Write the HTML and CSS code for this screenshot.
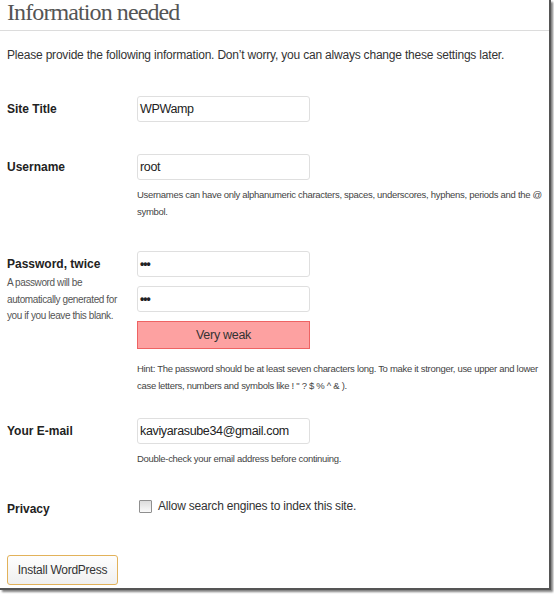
FILE: index.html
```html
<!DOCTYPE html>
<html>
<head>
<meta charset="utf-8">
<link rel="stylesheet" href="styles.css">
</head>
<body>
<div class="frame">
  <h1 class="title">Information needed</h1>
  <p class="intro">Please provide the following information. Don’t worry, you can always change these settings later.</p>

  <div class="row row-site">
    <div class="label">Site Title</div>
    <div class="field"><div class="input">WPWamp</div></div>
  </div>

  <div class="row row-user">
    <div class="label">Username</div>
    <div class="field">
      <div class="input">root</div>
      <p class="desc">Usernames can have only alphanumeric characters, spaces, underscores, hyphens, periods and the @ symbol.</p>
    </div>
  </div>

  <div class="row row-pass">
    <div class="label">Password, twice
      <p class="label-desc">A password will be automatically generated for you if you leave this blank.</p>
    </div>
    <div class="field">
      <div class="input dots">•••</div>
      <div class="input dots second">•••</div>
      <div class="strength">Very weak</div>
      <p class="desc hint">Hint: The password should be at least seven characters long. To make it stronger, use upper and lower case letters, numbers and symbols like ! " ? $ % ^ &amp; ).</p>
    </div>
  </div>

  <div class="row row-mail">
    <div class="label">Your E-mail</div>
    <div class="field">
      <div class="input">kaviyarasube34@gmail.com</div>
      <p class="desc">Double-check your email address before continuing.</p>
    </div>
  </div>

  <div class="row row-privacy">
    <div class="label">Privacy</div>
    <div class="field check-line"><span class="checkbox"></span><span>Allow search engines to index this site.</span></div>
  </div>

  <div class="actions"><span class="button">Install WordPress</span></div>
</div>
</body>
</html>
```

FILE: styles.css
```css
html, body {
  margin: 0;
  padding: 0;
  background: #fff;
}
body {
  width: 554px;
  height: 594px;
  overflow: hidden;
  font-family: "Liberation Sans", Arial, sans-serif;
  color: #333;
}
.frame {
  box-sizing: border-box;
  width: 551px;
  height: 590px;
  border-right: 2px solid #555;
  border-bottom: 2px solid #555;
  box-shadow: 2px 2px 2px rgba(0,0,0,0.5);
  background: #fff;
}
.title {
  margin: 0;
  padding: 0 0 0 7px;
  height: 31px;
  border-bottom: 1px solid #dcdcdc;
  font-family: "Liberation Serif", "Times New Roman", serif;
  font-weight: normal;
  font-size: 24px;
  line-height: 24px;
  letter-spacing: -0.9px;
  color: #555;
  box-sizing: border-box;
}
.intro {
  margin: 16px 0 0 7px;
  font-size: 12px;
  line-height: 16px;
  letter-spacing: -0.2px;
  color: #333;
}
.row {
  display: grid;
  grid-template-columns: 130px 1fr;
  padding-left: 7px;
}
.row-site { margin-top: 33px; }
.row-user { margin-top: 32px; }
.row-pass { margin-top: 31px; }
.row-mail { margin-top: 24px; }
.row-privacy { margin-top: 28px; }
.label {
  font-weight: bold;
  font-size: 12px;
  line-height: 26px;
  color: #222;
}
.label-desc {
  margin: -2px 0 0;
  width: 114px;
  font-weight: normal;
  font-size: 10px;
  line-height: 16.5px;
  letter-spacing: -0.4px;
  color: #555;
}
.input {
  box-sizing: border-box;
  width: 173px;
  height: 26px;
  border: 1px solid #dfdfdf;
  border-radius: 3px;
  padding: 0 2px;
  font-size: 12.5px;
  line-height: 24px;
  letter-spacing: -0.35px;
  color: #222;
}
.dots {
  font-size: 12px;
  font-weight: bold;
  letter-spacing: -1px;
}
.second { margin-top: 9px; }
.strength {
  box-sizing: border-box;
  width: 173px;
  height: 28px;
  margin-top: 9px;
  background: #fda1a1;
  border: 1px solid #ee6363;
  text-align: center;
  font-size: 12.5px;
  line-height: 26px;
  letter-spacing: -0.3px;
  color: #333;
}
.desc {
  margin: 7px 0 0;
  font-size: 9.5px;
  line-height: 16.5px;
  letter-spacing: -0.3px;
  color: #444;
}
.hint { margin-top: 12px; }
.check-line {
  display: flex;
  align-items: center;
  gap: 6px;
  font-size: 12px;
  line-height: 16px;
  letter-spacing: -0.2px;
  color: #333;
  padding-left: 2px;
}
.checkbox {
  display: inline-block;
  width: 11px;
  height: 11px;
  border: 1px solid #8f8f8f;
  border-radius: 1px;
  background: linear-gradient(#dcdcdc, #fafafa);
}
.row-privacy .label { line-height: 16px; padding-top: 5px; }
.actions {
  margin-top: 38px;
  padding-left: 7px;
}
.button {
  display: inline-block;
  box-sizing: border-box;
  width: 111px;
  height: 30px;
  border: 1px solid #e2b25a;
  border-radius: 3px;
  background: linear-gradient(#fefefe, #f0f0f0);
  text-align: center;
  font-size: 12px;
  line-height: 28px;
  letter-spacing: -0.25px;
  color: #333;
}
```
